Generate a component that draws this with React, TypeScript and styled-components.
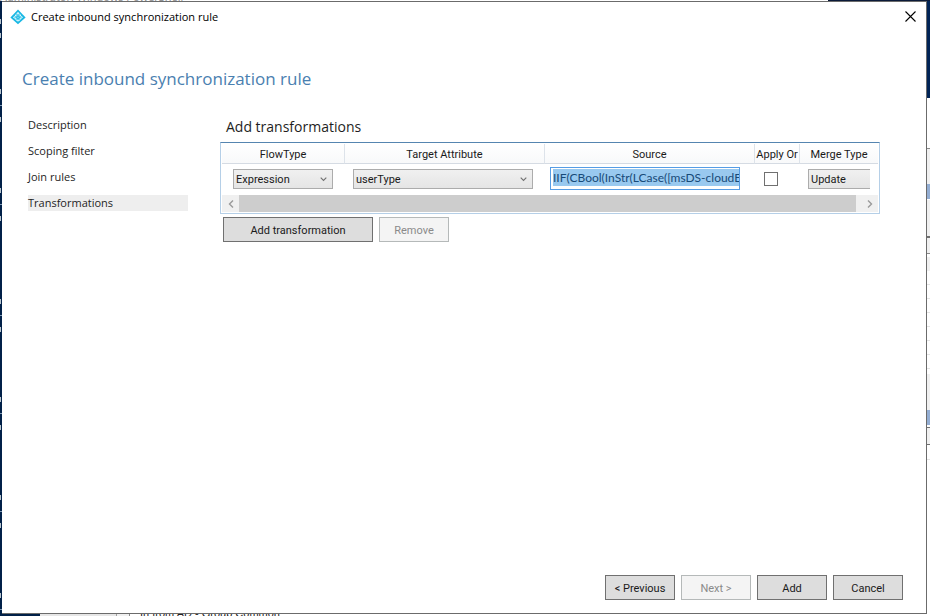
import React from "react";
import styled, { createGlobalStyle, css } from "styled-components";

const GlobalStyle = createGlobalStyle`
  *, *::before, *::after { box-sizing: border-box; }
  body { margin: 0; background: #012456; }
  body, button, input, select { font-family: "Open Sans", "Noto Sans", sans-serif; font-size: 11px; }
`;

const controlFont = css`
  font-family: Roboto, "Open Sans", sans-serif;
  font-size: 11px;
  color: #1a1a1a;
`;

/* ---------- what shows round the dialog ---------- */

const Desktop = styled.div`
  display: grid;
  grid-template: "top top top" 1px "left dialog right" 1fr "bottom bottom bottom" 2px / 2px 1fr 3px;
  min-height: 100vh;
  background: #ffffff;
`;

const TopStrip = styled.div`
  grid-area: top;
  display: flex;
  overflow: hidden;
  background: #ffffff;
  justify-content: space-between;
`;

const TopStripText = styled.div`
  margin-top: -11px;
  line-height: 16px;
  white-space: nowrap;
  color: #8a8a8a;
`;

const TopStripNavy = styled.div`
  width: 102px;
  background: #0a1a38;
`;

const LeftStrip = styled.div`
  grid-area: left;
  background: #012048;
`;

const LeftMark = styled.div<{ $gap: number; $tall?: boolean }>`
  margin-top: ${(p) => p.$gap}px;
  height: ${(p) => (p.$tall ? 5 : 1)}px;
  width: ${(p) => (p.$tall ? 1 : 2)}px;
  background: ${(p) => (p.$tall ? "#b9c6cf" : "#7f9ab5")};
`;

const RightStrip = styled.div`
  grid-area: right;
  background: #ffffff;
`;

const Band = styled.div<{ $height: number; $color: string }>`
  height: ${(p) => p.$height}px;
  background: ${(p) => p.$color};
`;

const BottomStrip = styled.div`
  grid-area: bottom;
  display: flex;
  overflow: hidden;
  background: #ffffff;
`;

const BottomPiece = styled.div<{ $width: number; $color: string }>`
  width: ${(p) => p.$width}px;
  background: ${(p) => p.$color};
`;

const BottomText = styled.div`
  padding-left: 10px;
  line-height: 14px;
  margin-top: -8px;
  white-space: nowrap;
  font-family: "Liberation Sans", Arial, sans-serif;
  font-size: 11px;
  color: #222222;
`;

/* ---------- dialog ---------- */

const Dialog = styled.main`
  grid-area: dialog;
  display: flex;
  flex-direction: column;
  background: #ffffff;
  border: solid #6b6b6b;
  border-width: 1px 1px 1px 0;
  color: #000000;
`;

const TitleBar = styled.header`
  display: flex;
  align-items: center;
  height: 29px;
  padding: 0 10px 0 8px;
  gap: 5px;
`;

const TitleText = styled.span`
  flex: 1;
  line-height: 16px;
`;

const CloseButton = styled.button`
  display: flex;
  border: 0;
  padding: 0;
  background: none;
`;

const Heading = styled.h1`
  margin: 36px 20px 0;
  font-size: 17px;
  line-height: 24px;
  font-weight: 400;
  color: #4a80b0;
`;

const Body = styled.div`
  flex: 1;
  display: flex;
  gap: 32px;
  padding: 25px 46px 0 26px;
`;

const Nav = styled.nav`
  display: flex;
  flex-direction: column;
  gap: 10px;
  width: 160px;
  padding-top: 1px;
`;

const NavLink = styled.a<{ $current?: boolean }>`
  height: 16px;
  line-height: 16px;
  color: #1e1e1e;
  text-decoration: none;
  background: ${(p) => (p.$current ? "#eeeeee" : "transparent")};
`;

const Panel = styled.section`
  flex: 1;
  min-width: 0;
`;

const PanelTitle = styled.h2`
  margin: 1px 6px 6px;
  font-size: 14px;
  line-height: 19px;
  font-weight: 400;
  color: #1e1e1e;
`;

const ListFrame = styled.div`
  border: 1px solid #b5cfe7;
  border-top-color: #5585b0;
  padding: 1px;
`;

const Table = styled.table`
  width: 100%;
  table-layout: fixed;
  border-collapse: separate;
  border-spacing: 0;
`;

const Th = styled.th`
  ${controlFont}
  height: 20px;
  padding: 2px 0 0;
  font-weight: 400;
  line-height: 16px;
  white-space: nowrap;
  overflow: hidden;
  border-bottom: 1px solid #d5dbe3;
  background: linear-gradient(#ffffff, #f8f9fa);
  &:not(:last-child) { border-right: 1px solid #dde3ea; }
`;

const Td = styled.td<{ $pad: string }>`
  height: 31px;
  padding: ${(p) => p.$pad};
  vertical-align: top;
`;

const Combo = styled.div`
  display: grid;
  align-items: center;
  > * { grid-area: 1 / 1; }
  > svg { justify-self: end; margin-right: 6px; pointer-events: none; }
`;

const Select = styled.select<{ $cut?: boolean }>`
  ${controlFont}
  display: block;
  appearance: none;
  width: 100%;
  height: 20px;
  padding: 0 2px;
  border: 1px solid #acacac;
  border-radius: 0;
  border-right-width: ${(p) => (p.$cut ? 0 : 1)}px;
  background: linear-gradient(#f0f0f0, #e5e5e5);
`;

const SourceInput = styled.input`
  display: block;
  width: 100%;
  height: 23px;
  padding: 1px 0 3px 2px;
  border: 1px solid #569de5;
  border-radius: 0;
  background: #99c9ef content-box;
  color: #174a78;
  font-family: Lato, "Open Sans", sans-serif;
  font-size: 12px;
`;

const CheckBox = styled.input`
  appearance: none;
  display: block;
  width: 14px;
  height: 14px;
  margin: 0;
  border: 1px solid #707070;
  background: #ffffff;
`;

const ScrollBar = styled.div`
  display: flex;
  height: 17px;
  background: #f0f0f0;
`;

const ScrollArrow = styled.button`
  display: grid;
  place-items: center;
  width: 17px;
  padding: 0;
  border: 0;
  background: none;
`;

const ScrollThumb = styled.div`
  flex: 1;
  margin-right: 5px;
  background: #cdcdcd;
`;

const ButtonRow = styled.div<{ $footer?: boolean }>`
  display: flex;
  gap: 6px;
  ${(p) =>
    p.$footer
      ? css`justify-content: flex-end; padding: 0 23px 13px;`
      : css`padding: 3px 3px 0;`}
`;

const Button = styled.button<{ $wide?: boolean }>`
  ${controlFont}
  width: ${(p) => (p.$wide ? 150 : 70)}px;
  height: 25px;
  padding: 2px 0 0;
  border: 1px solid #707070;
  background: #dddddd;
  &:disabled {
    border-color: #b5b9b9;
    background: #f4f4f4;
    color: #8a8a8a;
  }
`;

const Logo = () => (
  <svg width="16" height="16" viewBox="0 0 16 16" aria-hidden="true">
    <path d="M8 0.5L15.6 8.4L8 15.2L0.4 8.4Z" fill="#1ab8e4" />
    <path d="M8 3.6L12.2 8.4L8 12.4L3.8 8.4Z" fill="#5fd0ee" stroke="#e8fafe" strokeWidth="1.1" strokeDasharray="1.8 0.7" />
    <path d="M8 6.2L10 8.3L8 10.3L6 8.3Z" fill="#1ab8e4" />
    <path d="M7.5 7.8H8.5V8.8H7.5Z" fill="#e8fafe" />
  </svg>
);

const Chevron = () => (
  <svg width="7" height="5" viewBox="0 0 7 5" aria-hidden="true">
    <path d="M0.7 0.7L3.5 3.5L6.3 0.7" fill="none" stroke="#707070" strokeWidth="1.1" />
  </svg>
);

const Arrow = ({ right }: { right?: boolean }) => (
  <svg width="6" height="8" viewBox="0 0 6 8" aria-hidden="true">
    <path d={right ? "M1 0.5L4.5 4L1 7.5" : "M5 0.5L1.5 4L5 7.5"} fill="none" stroke="#9a9a9a" strokeWidth="1.4" />
  </svg>
);

const steps = ["Description", "Scoping filter", "Join rules", "Transformations"];

const leftMarks: { gap: number; tall?: boolean }[] = [
  { gap: 18, tall: true }, { gap: 9, tall: true }, { gap: 51, tall: true }, { gap: 11 },
  { gap: 11, tall: true }, { gap: 66, tall: true }, { gap: 11 }, { gap: 11, tall: true },
  { gap: 78, tall: true }, { gap: 11 }, { gap: 11, tall: true }, { gap: 65, tall: true },
  { gap: 11 }, { gap: 11, tall: true }, { gap: 65, tall: true }, { gap: 11 },
  { gap: 11, tall: true }, { gap: 65, tall: true }, { gap: 11 },
];

const rightBands: [number, string][] = [
  [97, "#012456"], [50, "#ffffff"], [1, "#8a8a8a"], [35, "#f0f0f0"], [15, "#94aed3"], [1, "#ffffff"],
  [36, "#f0f0f0"], [2, "#707070"], [15, "#f0f0f0"], [1, "#8a8a8a"], [3, "#ffffff"], [14, "#f0f0f0"],
  [13, "#ffffff"], [1, "#e4e4e4"], [13, "#ffffff"], [1, "#e4e4e4"], [13, "#ffffff"], [1, "#e4e4e4"],
  [13, "#ffffff"], [1, "#e4e4e4"], [13, "#ffffff"], [1, "#e4e4e4"], [13, "#ffffff"], [1, "#e4e4e4"],
  [13, "#ffffff"], [1, "#e4e4e4"], [5, "#ffffff"], [36, "#f0f0f0"], [15, "#94aed3"], [2, "#ffffff"],
  [1, "#707070"], [16, "#f0f0f0"], [1, "#707070"], [14, "#ffffff"], [1, "#e4e4e4"],
];

export default function App() {
  return (
    <>
      <GlobalStyle />
      <Desktop>
        <TopStrip>
          <TopStripText>Administrator: Windows PowerShell</TopStripText>
          <TopStripNavy />
        </TopStrip>
        <LeftStrip>
          {leftMarks.map((m, i) => <LeftMark key={i} $gap={m.gap} $tall={m.tall} />)}
        </LeftStrip>

        <Dialog>
          <TitleBar>
            <Logo />
            <TitleText>Create inbound synchronization rule</TitleText>
            <CloseButton aria-label="Close">
              <svg width="11" height="11" viewBox="0 0 11 11" aria-hidden="true">
                <path d="M0.5 0.5L10.5 10.5M10.5 0.5L0.5 10.5" stroke="#000000" strokeWidth="1.1" />
              </svg>
            </CloseButton>
          </TitleBar>

          <Heading>Create inbound synchronization rule</Heading>

          <Body>
            <Nav aria-label="Steps">
              {steps.map((s) => (
                <NavLink key={s} href="#" $current={s === "Transformations"}>{s}</NavLink>
              ))}
            </Nav>

            <Panel>
              <PanelTitle>Add transformations</PanelTitle>
              <ListFrame>
                <Table>
                  <colgroup>
                    <col style={{ width: 123 }} />
                    <col style={{ width: 200 }} />
                    <col />
                    <col style={{ width: 45 }} />
                    <col style={{ width: 78 }} />
                  </colgroup>
                  <thead>
                    <tr>
                      <Th>FlowType</Th>
                      <Th>Target Attribute</Th>
                      <Th>Source</Th>
                      <Th>Apply Or</Th>
                      <Th>Merge Type</Th>
                    </tr>
                  </thead>
                  <tbody>
                    <tr>
                      <Td $pad="5px 12px 0 11px">
                        <Combo>
                          <Select aria-label="FlowType"><option>Expression</option></Select>
                          <Chevron />
                        </Combo>
                      </Td>
                      <Td $pad="5px 12px 0 8px">
                        <Combo>
                          <Select aria-label="Target Attribute"><option>userType</option></Select>
                          <Chevron />
                        </Combo>
                      </Td>
                      <Td $pad="3px 15px 0 5px">
                        <SourceInput aria-label="Source" defaultValue="IIF(CBool(InStr(LCase([msDS-cloudE" />
                      </Td>
                      <Td $pad="8px 0 0 9px"><CheckBox type="checkbox" aria-label="Apply Once" /></Td>
                      <Td $pad="5px 8px 0">
                        <Select $cut aria-label="Merge Type"><option>Update</option></Select>
                      </Td>
                    </tr>
                  </tbody>
                </Table>
                <ScrollBar>
                  <ScrollArrow aria-label="Scroll left"><Arrow /></ScrollArrow>
                  <ScrollThumb />
                  <ScrollArrow aria-label="Scroll right"><Arrow right /></ScrollArrow>
                </ScrollBar>
              </ListFrame>
              <ButtonRow>
                <Button $wide>Add transformation</Button>
                <Button disabled>Remove</Button>
              </ButtonRow>
            </Panel>
          </Body>

          <ButtonRow $footer>
            <Button>&lt; Previous</Button>
            <Button disabled>Next &gt;</Button>
            <Button>Add</Button>
            <Button>Cancel</Button>
          </ButtonRow>
        </Dialog>

        <RightStrip>
          {rightBands.map(([h, c], i) => <Band key={i} $height={h} $color={c} />)}
        </RightStrip>

        <BottomStrip>
          <BottomPiece $width={40} $color="#012048" />
          <BottomPiece $width={76} $color="#e6e6e6" />
          <BottomPiece $width={1} $color="#a0a0a0" />
          <BottomPiece $width={12} $color="#f0f0f0" />
          <BottomPiece $width={1} $color="#8a8a8a" />
          <BottomText>In from AD - Group Common</BottomText>
        </BottomStrip>
      </Desktop>
    </>
  );
}
